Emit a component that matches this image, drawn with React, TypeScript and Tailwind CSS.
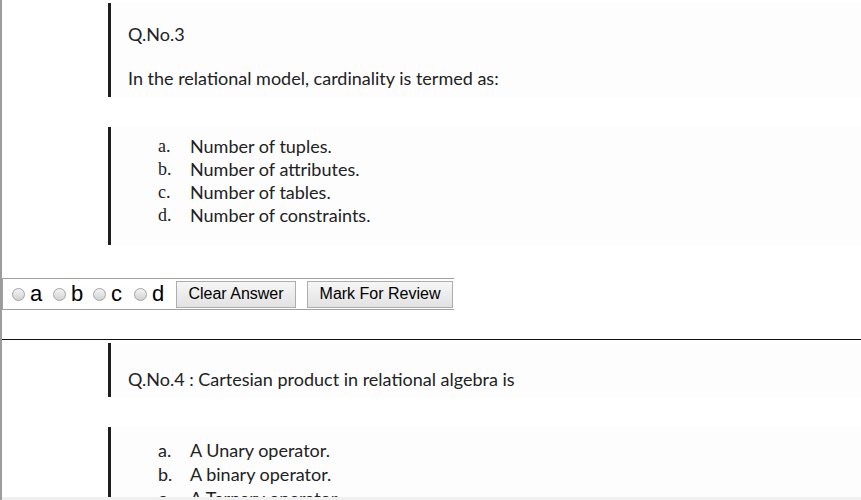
const calibri = { fontFamily: "Lato, 'Open Sans', sans-serif" };

type Opt = { key: string; text: string };

function Bar({ h }: { h: string }) {
  return <div className={`w-[3px] shrink-0 bg-[#1e1e1e] ${h}`} />;
}

function Radio({ label, w }: { label: string; w: string }) {
  return (
    <div className={`flex items-center shrink-0 ${w}`}>
      <span className="w-[13px] h-[13px] rounded-full border border-[#a3a3a3] bg-gradient-to-b from-[#f3f3f3] to-[#d2d2d2] shrink-0" />
      <span className="ml-[5px] text-[22px] leading-none text-black">{label}</span>
    </div>
  );
}

function Options({ opts, serif, top, lead }: { opts: Opt[]; serif: boolean; top: string; lead: string }) {
  return (
    <div className="flex pl-[106px]">
      <Bar h="h-[118px]" />
      <div className={`flex-1 bg-[#fdfdfd] pl-[47px] text-[18px] text-[#222] ${top} ${lead}`} style={calibri}>
        {opts.map((o) => (
          <div key={o.key} className="flex">
            <span
              className="w-[32px]"
              style={serif ? { fontFamily: "'Liberation Serif', serif" } : undefined}
            >
              {o.key}.
            </span>
            <span>{o.text}</span>
          </div>
        ))}
      </div>
    </div>
  );
}

export default function App() {
  return (
    <div className="relative h-[500px] overflow-hidden bg-white border-l-2 border-[#9c9c9c]">
      {/* question 3 */}
      <div className="flex pl-[106px] pt-[3px]">
        <Bar h="h-[94px]" />
        <div className="flex-1 bg-[#fdfdfd] pl-[17px] pt-[21px] text-[18px] leading-[20px] text-[#222]" style={calibri}>
          <p>Q.No.3</p>
          <p className="mt-[24px]">In the relational model, cardinality is termed as:</p>
        </div>
      </div>

      <div className="mt-[30px]">
        <Options
          serif
          top="pt-[8px]"
          lead="leading-[23px]"
          opts={[
            { key: "a", text: "Number of tuples." },
            { key: "b", text: "Number of attributes." },
            { key: "c", text: "Number of tables." },
            { key: "d", text: "Number of constraints." },
          ]}
        />
      </div>

      {/* answer row */}
      <div
        className="mt-[33px] flex items-center h-[32px] w-[452px] border-l border-t border-b border-[#a0a0a0] pl-[9px]"
        style={{ fontFamily: "'Liberation Sans', Arial, sans-serif" }}
      >
        <Radio label="a" w="w-[41px]" />
        <Radio label="b" w="w-[40px]" />
        <Radio label="c" w="w-[41px]" />
        <Radio label="d" w="w-[42px]" />
        <button className="h-[27px] w-[120px] border border-[#adadad] bg-gradient-to-b from-[#f6f6f6] to-[#e2e2e2] text-[16px] text-black">
          Clear Answer
        </button>
        <button className="ml-[11px] h-[27px] w-[146px] border border-[#adadad] bg-gradient-to-b from-[#f6f6f6] to-[#e2e2e2] text-[16px] text-black">
          Mark For Review
        </button>
      </div>

      <div className="mt-[29px] h-px bg-[#111]" />

      {/* question 4 */}
      <div className="flex pl-[106px] pt-[3px]">
        <Bar h="h-[54px]" />
        <div className="flex-1 bg-[#fdfdfd] pl-[17px] pt-[26px] text-[18px] leading-[20px] text-[#222]" style={calibri}>
          <p>Q.No.4 : Cartesian product in relational algebra is</p>
        </div>
      </div>

      <div className="mt-[30px]">
        <Options
          serif={false}
          top="pt-[11px]"
          lead="leading-[24px]"
          opts={[
            { key: "a", text: "A Unary operator." },
            { key: "b", text: "A binary operator." },
            { key: "c", text: "A Ternary operator." },
            { key: "d", text: "None of the above." },
          ]}
        />
      </div>

      <div className="absolute bottom-0 left-0 right-0 h-[3px] bg-[#f0f0f0]" />
    </div>
  );
}
